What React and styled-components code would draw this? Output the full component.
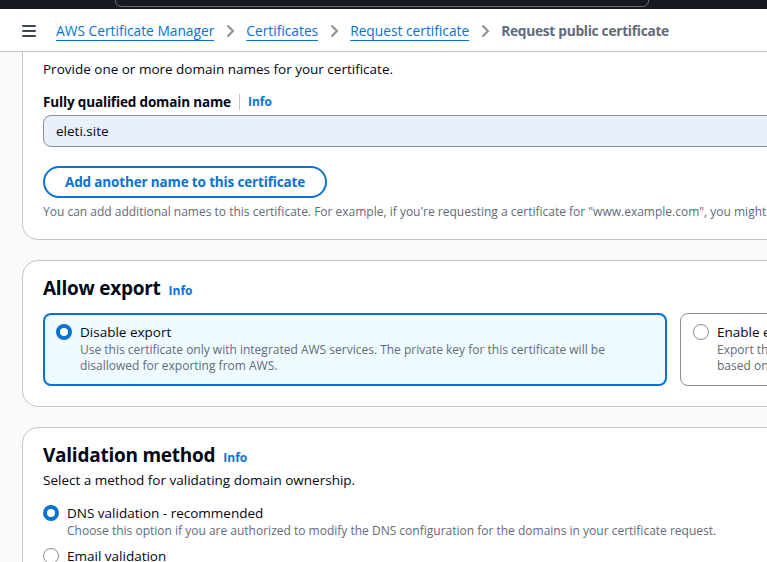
import React from 'react'
import styled, { createGlobalStyle } from 'styled-components'

const GlobalStyle = createGlobalStyle`
  html, body {
    margin: 0;
    padding: 0;
    background: #fafafa;
    overflow: hidden;
  }
  body {
    font-family: "Open Sans", "Noto Sans", Arial, sans-serif;
    color: #000716;
  }
`

const Page = styled.div`
  width: 767px;
  height: 562px;
  overflow: hidden;
`

const TopBar = styled.header`
  display: block;
  height: 9px;
  background-color: #16191f;
  position: relative;
  overflow: hidden;
`

const SearchShape = styled.div`
  position: absolute;
  left: 115px;
  top: -6px;
  width: 534px;
  height: 13px;
  border: 1px solid #687078;
  border-radius: 6px;
  box-sizing: border-box;
`

const Breadcrumbs = styled.nav`
  height: 43px;
  background: #ffffff;
  border-bottom: 1px solid #c6c6cd;
  display: flex;
  align-items: center;
  padding: 1px 0 0 22px;
  box-sizing: border-box;
  font-size: 13.75px;
  white-space: nowrap;
`

const Burger = styled.span`
  display: flex;
  flex-direction: column;
  gap: 3px;
  width: 14px;
  margin-right: 20px;
  span {
    height: 2px;
    background: #424650;
    border-radius: 1px;
  }
`

const Crumb = styled.a`
  color: #0972d3;
  text-decoration: underline;
  text-underline-offset: 4px;
  text-decoration-thickness: 1px;
`

const Current = styled.span`
  color: #5f6b7a;
  font-weight: 700;
  letter-spacing: -0.3px;
`

const Chevron = styled.svg`
  width: 16px;
  height: 16px;
  margin: 0 8px;
  flex-shrink: 0;
`

const Main = styled.main`
  display: flex;
  flex-direction: column;
  gap: 20px;
  padding-left: 22px;
`

const Card = styled.section`
  width: 1300px;
  background: #ffffff;
  border: 1px solid #c6c6cd;
  border-radius: ${p => (p.$clipped ? '0 0 16px 16px' : '16px')};
  border-top: ${p => (p.$clipped ? 'none' : '1px solid #c6c6cd')};
  padding: ${p => (p.$clipped ? '7px 20px 19px' : '14px 20px 20px')};
  box-sizing: border-box;
  flex-shrink: 0;
`

const Heading = styled.h2`
  margin: 0;
  height: 26px;
  font-size: 19px;
  line-height: 26px;
  font-weight: 700;
  letter-spacing: -0.25px;
  display: flex;
  align-items: baseline;
  gap: 8px;
`

const InfoLink = styled.a`
  color: #0972d3;
  font-size: 12px;
  line-height: 16px;
  font-weight: 700;
  letter-spacing: 0;
`

const Text = styled.p`
  margin: ${p => p.$m || '0'};
  font-size: 13.5px;
  line-height: 20px;
  color: #000716;
`

const Label = styled.div`
  display: flex;
  align-items: center;
  font-size: 13.5px;
  line-height: 20px;
  font-weight: 700;
  letter-spacing: -0.15px;
  margin-top: 13px;
`

const Divider = styled.span`
  width: 1px;
  height: 16px;
  background: #c6c6cd;
  margin: 0 8px;
`

const Input = styled.input`
  display: block;
  width: 100%;
  height: 32px;
  margin-top: 3px;
  box-sizing: border-box;
  background: #e8f0fe;
  border: 1px solid #8c8c94;
  border-radius: 8px;
  padding: 0 12px;
  font: inherit;
  font-size: 13.5px;
  color: #000716;
  outline: none;
`

const OutlineButton = styled.button`
  display: block;
  margin-top: 19px;
  height: 32px;
  padding: 0 20px;
  border: 2px solid #0972d3;
  border-radius: 20px;
  background: #ffffff;
  color: #0972d3;
  font: inherit;
  font-size: 13.5px;
  font-weight: 700;
  letter-spacing: -0.15px;
`

const Hint = styled.p`
  margin: 6px 0 0;
  font-size: 12px;
  line-height: 16px;
  color: #5f6b7a;
  white-space: nowrap;
`

const Tiles = styled.div`
  display: grid;
  grid-template-columns: 624px 624px;
  gap: 13px;
  margin-top: 12px;
`

const Tile = styled.label`
  display: flex;
  gap: 8px;
  padding: ${p => (p.$selected ? '7px 12px 10px 11px' : '8px 13px 11px 12px')};
  border: ${p => (p.$selected ? '2px solid #0972d3' : '1px solid #8c8c94')};
  background: ${p => (p.$selected ? '#f0fbff' : '#ffffff')};
  border-radius: 8px;
  height: 73px;
  box-sizing: border-box;
`

const Radio = styled.span`
  flex-shrink: 0;
  width: 16px;
  height: 16px;
  margin-top: 2px;
  border-radius: 50%;
  box-sizing: border-box;
  background: #ffffff;
  border: ${p => (p.$checked ? '4px solid #0972d3' : '1px solid #8c8c94')};
`

const OptionBody = styled.div`
  display: flex;
  flex-direction: column;
`

const OptionTitle = styled.span`
  font-size: 13.5px;
  line-height: 20px;
  color: #000716;
`

const OptionDesc = styled.span`
  font-size: 12px;
  line-height: 16px;
  color: #5f6b7a;
`

const RadioGroup = styled.div`
  display: flex;
  flex-direction: column;
  gap: 7px;
  margin-top: 13px;
`

const RadioRow = styled.label`
  display: flex;
  gap: 8px;
`

const ChevronIcon = () => (
  <Chevron viewBox="0 0 16 16" fill="none">
    <path d="M5.5 2.5 11 8l-5.5 5.5" stroke="#8c8c94" strokeWidth="2" />
  </Chevron>
)

const App = () => {
  return (
    <Page>
      <GlobalStyle />
      <TopBar>
        <SearchShape />
      </TopBar>
      <Breadcrumbs>
        <Burger>
          <span />
          <span />
          <span />
        </Burger>
        <Crumb>AWS Certificate Manager</Crumb>
        <ChevronIcon />
        <Crumb>Certificates</Crumb>
        <ChevronIcon />
        <Crumb>Request certificate</Crumb>
        <ChevronIcon />
        <Current>Request public certificate</Current>
      </Breadcrumbs>
      <Main>
        <Card $clipped>
          <Text>Provide one or more domain names for your certificate.</Text>
          <Label>
            Fully qualified domain name
            <Divider />
            <InfoLink>Info</InfoLink>
          </Label>
          <Input defaultValue="eleti.site" />
          <OutlineButton>Add another name to this certificate</OutlineButton>
          <Hint>
            You can add additional names to this certificate. For example, if you're requesting a
            certificate for "www.example.com", you might want to add the name "example.com" so that
            customers can reach your site by either name.
          </Hint>
        </Card>

        <Card>
          <Heading>
            Allow export <InfoLink>Info</InfoLink>
          </Heading>
          <Tiles>
            <Tile $selected>
              <Radio $checked />
              <OptionBody>
                <OptionTitle>Disable export</OptionTitle>
                <OptionDesc>
                  Use this certificate only with integrated AWS services. The private key for this
                  certificate will be disallowed for exporting from AWS.
                </OptionDesc>
              </OptionBody>
            </Tile>
            <Tile>
              <Radio />
              <OptionBody>
                <OptionTitle>Enable export</OptionTitle>
                <OptionDesc>
                  Export this certificate and its private key for use anywhere. Additional charges apply,
                  <br />
                  based on the number of fully qualified domain names in the certificate.
                </OptionDesc>
              </OptionBody>
            </Tile>
          </Tiles>
        </Card>

        <Card>
          <Heading>
            Validation method <InfoLink>Info</InfoLink>
          </Heading>
          <Text $m="2px 0 0">Select a method for validating domain ownership.</Text>
          <RadioGroup>
            <RadioRow>
              <Radio $checked />
              <OptionBody>
                <OptionTitle>DNS validation - recommended</OptionTitle>
                <OptionDesc>
                  Choose this option if you are authorized to modify the DNS configuration for the
                  domains in your certificate request.
                </OptionDesc>
              </OptionBody>
            </RadioRow>
            <RadioRow>
              <Radio />
              <OptionBody>
                <OptionTitle>Email validation</OptionTitle>
                <OptionDesc>
                  Choose this option if you do not have permission or cannot obtain permission to
                  modify the DNS configuration for the domains in your certificate request.
                </OptionDesc>
              </OptionBody>
            </RadioRow>
          </RadioGroup>
        </Card>
      </Main>
    </Page>
  )
}

export default App
